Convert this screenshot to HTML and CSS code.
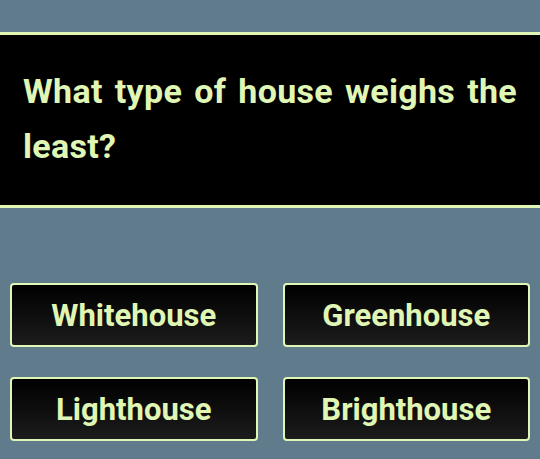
FILE: index.html
```html
<!DOCTYPE html>
<html>
<head>
<meta charset="utf-8">
<link rel="stylesheet" href="styles.css">
</head>
<body>
<div class="quiz">
  <div class="question">What type of house weighs the least?</div>
  <div class="answers">
    <button class="answer">Whitehouse</button>
    <button class="answer">Greenhouse</button>
    <button class="answer">Lighthouse</button>
    <button class="answer">Brighthouse</button>
  </div>
</div>
</body>
</html>
```
FILE: styles.css
```css
html, body {
  margin: 0;
  padding: 0;
  background: #607b8c;
  height: 100%;
}
.quiz {
  padding-top: 32px;
  font-family: Roboto, "Liberation Sans", sans-serif;
}
.question {
  background: #000;
  color: #e0f6b4;
  border-top: 3px solid #e0f6b4;
  border-bottom: 3px solid #e0f6b4;
  padding: 29px 23px 31px;
  font-size: 34px;
  font-weight: 700;
  line-height: 55px;
  letter-spacing: 0.3px;
  text-align: justify;
}
.answers {
  display: grid;
  grid-template-columns: 1fr 1fr;
  column-gap: 25px;
  row-gap: 30px;
  padding: 75px 10px 0;
}
.answer {
  height: 64px;
  background: linear-gradient(#000, #1c1c1c);
  border: 2px solid #e0f6b4;
  border-radius: 4px;
  color: #e0f6b4;
  font-family: Roboto, "Liberation Sans", sans-serif;
  font-size: 31px;
  font-weight: 700;
  padding: 0;
}
```
